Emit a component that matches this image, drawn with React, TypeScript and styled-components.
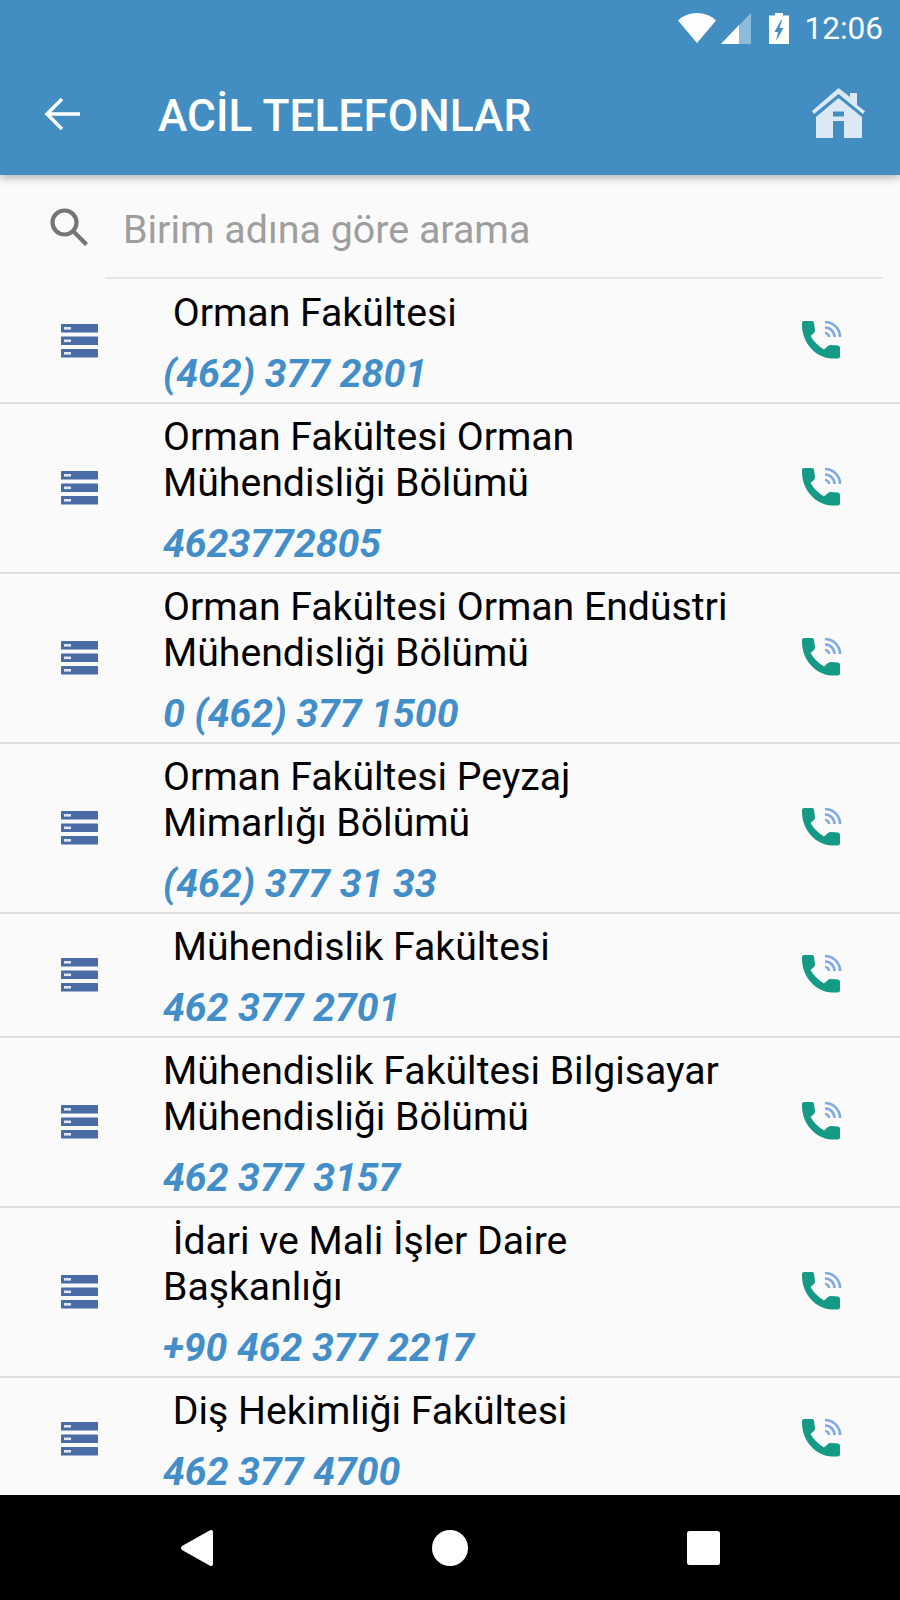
import React from "react";
import styled, { createGlobalStyle } from "styled-components";

const Global = createGlobalStyle`
  html, body { margin: 0; padding: 0; background: #fafafa; }
  * { box-sizing: border-box; }
`;

const Screen = styled.div`
  width: 900px;
  height: 1600px;
  display: flex;
  flex-direction: column;
  overflow: hidden;
  background: #fafafa;
  font-family: Roboto, "Liberation Sans", sans-serif;
`;

const Header = styled.header`
  height: 175px;
  flex: none;
  background: #428ec3;
  box-shadow: 0 3px 8px rgba(0, 0, 0, 0.28);
  position: relative;
  z-index: 2;
  display: flex;
  flex-direction: column;
`;

const StatusBar = styled.div`
  height: 56px;
  display: flex;
  align-items: center;
  justify-content: flex-end;
  padding-right: 17px;
  color: #fff;
`;

const StatusIcon = styled.svg<{ $m?: number }>`
  display: block;
  margin-right: ${(p) => p.$m ?? 0}px;
`;

const Clock = styled.span`
  font-size: 31.5px;
  font-weight: 400;
`;

const Toolbar = styled.div`
  flex: 1;
  display: flex;
  align-items: center;
  padding: 0 35px 4px 44px;
  color: #fff;
`;

const Title = styled.h1`
  flex: 1;
  margin: 4px 0 0 78px;
  font-size: 44.3px;
  font-weight: 500;
  line-height: 48px;
`;

const SearchRow = styled.div`
  height: 104.5px;
  flex: none;
  margin-right: 17px;
  display: flex;
  align-items: center;
  padding-left: 50px;
  position: relative;
`;

const SearchInput = styled.div`
  margin: 4px 0 0 35px;
  font-size: 39.4px;
  color: #9e9e9e;
`;

const SearchLine = styled.div`
  position: absolute;
  left: 105px;
  right: 0;
  bottom: 1px;
  height: 2px;
  background: #e6e6e6;
`;

const List = styled.div`
  flex: 1;
  overflow: hidden;
  display: flex;
  flex-direction: column;
`;

const Row = styled.div`
  flex: none;
  display: flex;
  align-items: center;
  border-bottom: 2px solid #dfdfdf;
`;

const IconCell = styled.div`
  width: 164px;
  flex: none;
  padding-left: 61px;
  display: flex;
`;

const Body = styled.div`
  flex: none;
  width: 570px;
  margin-left: -1px;
  margin-right: 69px;
  padding: 10px 0 4px;
  display: flex;
  flex-direction: column;
`;

const Name = styled.div`
  font-size: 39.2px;
  line-height: 46px;
  color: #000;
  white-space: pre-wrap;
`;

const Phone = styled.div`
  font-size: 39.2px;
  line-height: 48px;
  margin-top: 14px;
  font-weight: 700;
  font-style: italic;
  color: #428ec9;
`;

const NavBar = styled.nav`
  height: 105px;
  flex: none;
  background: #000;
  position: relative;
  z-index: 2;
  display: grid;
  grid-template-columns: 181px 32px 219px 36px 219px 33px;
  align-items: center;
`;

const NavIcon = styled.svg`
  display: block;
  fill: #fff;
`;

const NavGap = styled.span``;

function ServerIcon() {
  return (
    <svg width="37" height="34" viewBox="0 0 37 34">
      {[0, 12.5, 25].map((y) => (
        <g key={y}>
          <rect x="0" y={y} width="37" height="8.6" rx="0.6" fill="#4a6ca6" />
          <rect x="3" y={y + 3} width="7" height="2.6" fill="#dfe7f2" />
        </g>
      ))}
    </svg>
  );
}

function CallIcon() {
  return (
    <svg width="40" height="40" viewBox="0 0 40 40">
      <path
        d="M2 0h8q2 0 2 2l1 7q0 2-1 3l-3.500 3q4.500 8 13.500 13.500l4-3.500q1-1 3-1l7 .5q2 .5 2 2.500v8q0 2.500-2.500 2.500H30C14 37 0 22 0 4V2q0-2 2-2z"
        fill="#159a85"
      />
      <g fill="none" stroke="#7ea9e6" strokeWidth="2.600">
        <path d="M23 1a15 15 0 0 1 15 15" />
        <path d="M23 6.500a9.500 9.500 0 0 1 9.500 9.500" />
        <path d="M23 12a4 4 0 0 1 4 4" />
      </g>
    </svg>
  );
}

const rows = [
  { name: " Orman Fakültesi", phone: "(462) 377 2801" },
  { name: "Orman Fakültesi Orman Mühendisliği Bölümü", phone: "4623772805" },
  { name: "Orman Fakültesi Orman Endüstri Mühendisliği Bölümü", phone: "0 (462) 377 1500" },
  { name: "Orman Fakültesi Peyzaj Mimarlığı Bölümü", phone: "(462) 377 31 33" },
  { name: " Mühendislik Fakültesi", phone: "462 377 2701" },
  { name: "Mühendislik Fakültesi Bilgisayar Mühendisliği Bölümü", phone: "462 377 3157" },
  { name: " İdari ve Mali İşler Daire Başkanlığı", phone: "+90 462 377 2217" },
  { name: " Diş Hekimliği Fakültesi", phone: "462 377 4700" },
];

export default function App() {
  return (
    <Screen>
      <Global />
      <Header>
        <StatusBar>
          <StatusIcon $m={5} width="38" height="30" viewBox="0 0 38 30">
            <path d="M0 7.500C5 2.800 11.500 0 19 0s14 2.800 19 7.500L19 30z" fill="#fff" />
          </StatusIcon>
          <StatusIcon $m={18} width="30" height="31" viewBox="0 0 30 31">
            <path d="M30 0v31H0z" fill="#fff" fillOpacity="0.4" />
            <path d="M18 12v19H0z" fill="#fff" />
          </StatusIcon>
          <StatusIcon $m={16} width="20" height="31" viewBox="0 0 20 31">
            <path d="M6 0h8v2.500h6V31H0V2.500h6z" fill="#fff" />
            <path d="M12 7 5.500 19H9L7 28l7.500-13h-4L13 7z" fill="#428ec3" />
          </StatusIcon>
          <Clock>12:06</Clock>
        </StatusBar>
        <Toolbar>
          <svg width="36" height="34" viewBox="0 0 36 34" fill="none" stroke="#fff" strokeWidth="3.500">
            <path d="M36 17H3M18 2 3 17l15 15" />
          </svg>
          <Title>ACİL TELEFONLAR</Title>
          <svg width="53" height="51" viewBox="0 0 53 51" fill="#dce9f5">
            <path d="M26.500 0 38 9V5h7v12l8 6-2 3L26.500 6 2 26l-2-3z" />
            <path d="M26.500 10 50 29v21H32V33H21v17H4V29zM21 23.500v5h11v-5z" fillRule="evenodd" />
          </svg>
        </Toolbar>
      </Header>
      <SearchRow>
        <svg width="38" height="38" viewBox="0 0 38 38" fill="none" stroke="#757575" strokeWidth="4.200">
          <circle cx="14.500" cy="14.500" r="12" />
          <path d="m23 23 13.500 13.500" />
        </svg>
        <SearchInput>Birim adına göre arama</SearchInput>
        <SearchLine />
      </SearchRow>
      <List>
        {rows.map((r) => (
          <Row key={r.phone}>
            <IconCell>
              <ServerIcon />
            </IconCell>
            <Body>
              <Name>{r.name}</Name>
              <Phone>{r.phone}</Phone>
            </Body>
            <CallIcon />
          </Row>
        ))}
      </List>
      <NavBar>
        <NavGap />
        <NavIcon width="32" height="36" viewBox="0 0 32 36">
          <path d="M30 0c1.200 0 2 .8 2 2v32c0 1.200-.8 2-2 2-.5 0-1-.2-1.400-.6L1 20c-1.300-1.200-1.300-2.800 0-4L28.600.6c.4-.4.900-.6 1.400-.6z" />
        </NavIcon>
        <NavGap />
        <NavIcon width="36" height="36" viewBox="0 0 36 36">
          <circle cx="18" cy="18" r="18" />
        </NavIcon>
        <NavGap />
        <NavIcon width="33" height="34" viewBox="0 0 33 34">
          <rect width="33" height="34" rx="2.500" />
        </NavIcon>
      </NavBar>
    </Screen>
  );
}
